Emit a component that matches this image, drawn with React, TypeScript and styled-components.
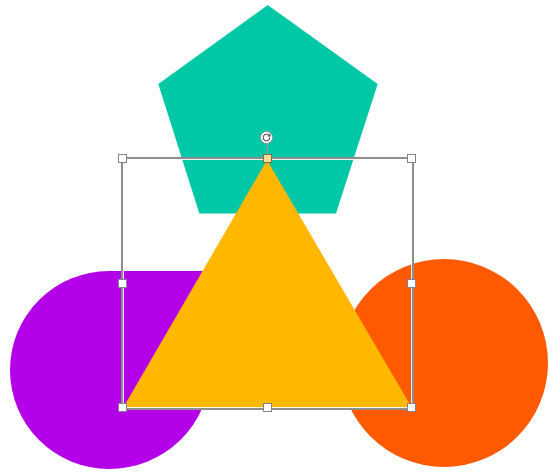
import React from "react";
import styled, { createGlobalStyle } from "styled-components";
import { RotateCw } from "lucide-react";

const Global = createGlobalStyle`
  html, body { margin: 0; padding: 0; background: #ffffff; }
  body { font-family: "Liberation Sans", Arial, sans-serif; }
`;

const Canvas = styled.div`
  position: relative;
  width: 557px;
  height: 474px;
  background: #ffffff;
  overflow: hidden;
`;

const Drawing = styled.svg`
  position: absolute;
  left: 0;
  top: 0;
  width: 557px;
  height: 474px;
`;

const Selection = styled.div`
  position: absolute;
  left: 121px;
  top: 157px;
  width: 293px;
  height: 253px;
  box-sizing: border-box;
  border: 2px solid #8e8e8e;
  box-shadow: inset 0 0 0 1px rgba(255, 255, 255, 0.9);
`;

const Handle = styled.div<{ $x: number; $y: number; $active?: boolean }>`
  position: absolute;
  left: calc(${(p) => p.$x}% - 5px);
  top: calc(${(p) => p.$y}% - 5px);
  width: 9px;
  height: 9px;
  box-sizing: border-box;
  background: ${(p) => (p.$active ? "#ffdc9a" : "#ffffff")};
  border: 1px solid ${(p) => (p.$active ? "#8a6b3c" : "rgba(40, 20, 60, 0.55)")};
`;

const RotateStem = styled.div`
  position: absolute;
  left: calc(50% - 1px);
  top: -16px;
  width: 1px;
  height: 12px;
  background: #9a9a9a;
`;

const RotateKnob = styled.div`
  position: absolute;
  left: calc(50% - 8px);
  top: -28px;
  width: 13px;
  height: 13px;
  box-sizing: border-box;
  border-radius: 50%;
  background: #ffffff;
  border: 1px solid #9a9a9a;
  display: flex;
  align-items: center;
  justify-content: center;
  color: #3a3a3a;
`;

const handles: Array<[number, number]> = [
  [0, 0],
  [100, 0],
  [0, 50],
  [100, 50],
  [0, 100],
  [50, 100],
  [100, 100],
];

export default function App() {
  return (
    <>
      <Global />
      <Canvas>
        <Drawing viewBox="0 0 557 474">
          <polygon
            points="267.7,5 377.7,84 336,213.5 199.3,213.5 158.3,84"
            fill="#00c8a6"
          />
          <path
            d="M109,271 H210 V370 A101,99 0 0 1 109,469 A99,99 0 0 1 10,370 A99,99 0 0 1 109,271 Z"
            fill="#b400e8"
          />
          <circle cx="444" cy="363" r="104" fill="#ff5a00" />
          <polygon points="267,160 123,408 412,408" fill="#ffb700" />
        </Drawing>
        <Selection>
          <RotateStem />
          <RotateKnob>
            <RotateCw size={9} strokeWidth={2.6} />
          </RotateKnob>
          {handles.map(([x, y]) => (
            <Handle key={`${x}-${y}`} $x={x} $y={y} />
          ))}
          <Handle $x={50} $y={0} $active />
        </Selection>
      </Canvas>
    </>
  );
}
